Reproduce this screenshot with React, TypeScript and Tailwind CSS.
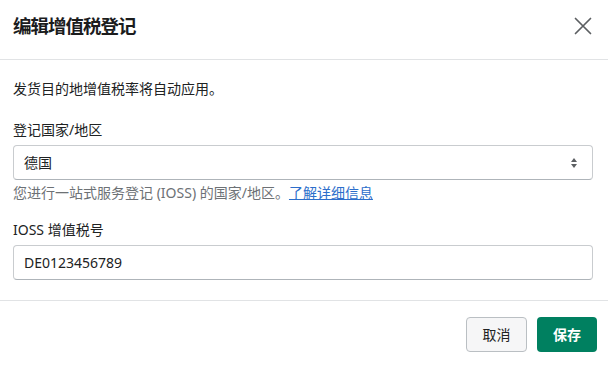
export default function App() {
  return (
    <div
      className="w-[608px] h-[365px] bg-white text-[#202223] overflow-hidden"
      style={{ fontFamily: '"Noto Sans", "Noto Sans CJK SC", sans-serif' }}
    >
      {/* Header */}
      <div className="h-[60px] flex items-center justify-between pl-[13px] pr-[16px] pb-[8px] border-b border-[#e1e3e5]">
        <h2 className="text-[18.5px] font-bold leading-6 tracking-[-1px] text-[#1b1c1d]">编辑增值税登记</h2>
        <button className="text-[#5c5f62]">
          <svg width="18" height="18" viewBox="0 0 18 18" fill="none">
            <path d="M1.5 1.5 L16.5 16.5 M16.5 1.5 L1.5 16.5" stroke="currentColor" strokeWidth="1.7" strokeLinecap="round" />
          </svg>
        </button>
      </div>

      {/* Body */}
      <div className="pl-[13px] pr-[15px] pt-[19px] pb-[20px] border-b border-[#e1e3e5]">
        <p className="text-[14px] leading-5">发货目的地增值税率将自动应用。</p>

        <div className="mt-[21px]">
          <label className="block text-[14px] leading-5">登记国家/地区</label>
          <div className="mt-[5px] h-[35px] flex items-center rounded-[4px] border border-[#c9cccf] border-b-[#aeb4b9] pl-[10px] pr-[14px]">
            <span className="text-[14px] flex-1">德国</span>
            <svg width="8" height="12" viewBox="0 0 8 12" className="text-[#5c5f62]">
              <path d="M4 1 L7 5 H1 Z" fill="currentColor" />
              <path d="M4 11 L7 7 H1 Z" fill="currentColor" />
            </svg>
          </div>
          <p className="mt-[3px] text-[14px] leading-5 text-[#6d7175]">
            您进行一站式服务登记 (IOSS) 的国家/地区。
            <a className="text-[#2c6ecb] underline">了解详细信息</a>
          </p>
        </div>

        <div className="mt-[17px]">
          <label className="block text-[14px] leading-5">IOSS 增值税号</label>
          <div className="mt-[5px] h-[35px] flex items-center rounded-[4px] border border-[#c9cccf] border-b-[#aeb4b9] pl-[10px]">
            <span className="text-[14px]">DE0123456789</span>
          </div>
        </div>
      </div>

      {/* Footer */}
      <div className="flex justify-end gap-[10px] pt-[16px] pr-[11px]">
        <button className="w-[61px] h-[35px] rounded-[4px] border border-[#babfc3] bg-[#f6f6f7] text-[14px] text-[#202223]">
          取消
        </button>
        <button className="w-[60px] h-[35px] rounded-[4px] bg-[#008060] text-[14px] font-semibold text-white">
          保存
        </button>
      </div>
    </div>
  )
}
